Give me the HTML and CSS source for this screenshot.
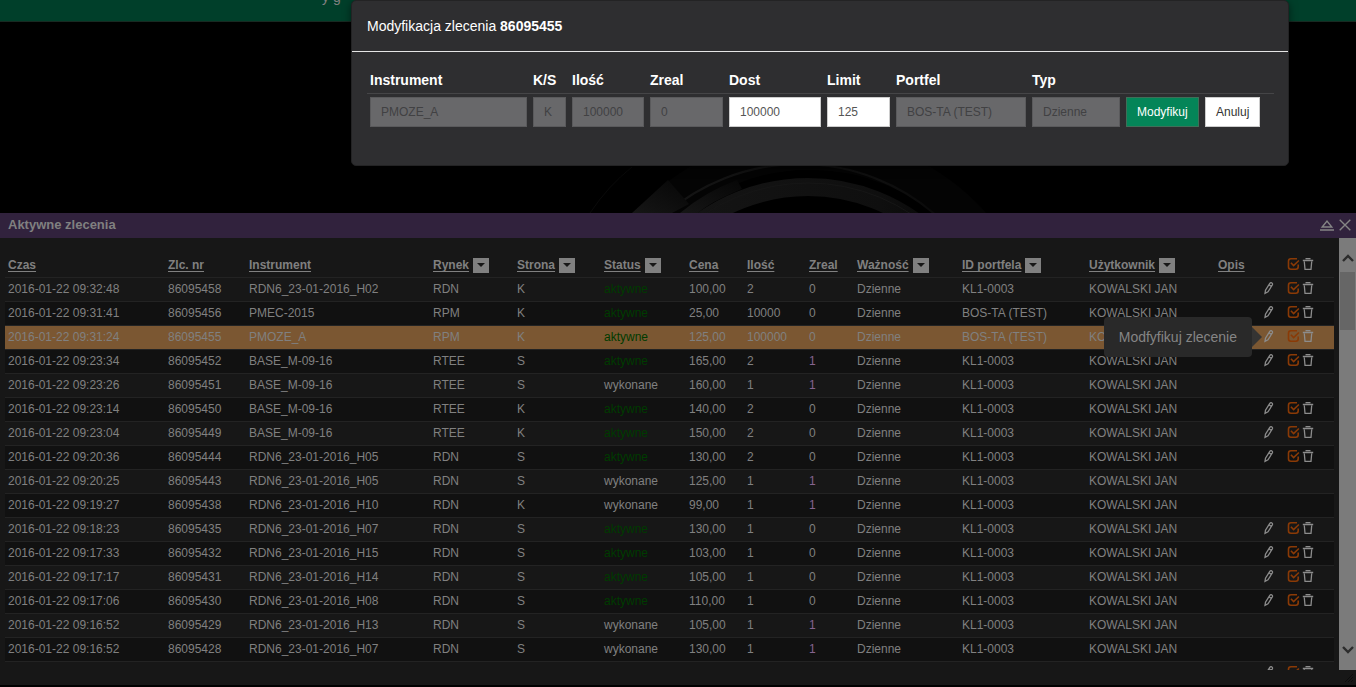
FILE: index.html
```html
<!DOCTYPE html>
<html lang="pl">
<head>
<meta charset="utf-8">
<title>Aktywne zlecenia</title>
<link rel="stylesheet" href="styles.css">
</head>
<body>
<svg class="sprite" aria-hidden="true">
  <symbol id="i-pencil" viewBox="0 0 12 14"><path d="M2 12.4 2.5 9.2 6.8 2.4Q7.6 1.2 8.8 1.9 10 2.8 9.3 4L5 10.8ZM6 3.9 8.6 5.5"/></symbol>
  <symbol id="i-check" viewBox="0 0 13 14"><path d="M11.2 7.5V9.8Q11.2 12.2 8.8 12.2H3.9Q1.5 12.2 1.5 9.8V4.2Q1.5 1.8 3.9 1.8H10"/><path d="M3.9 5.8 6.6 8.6 11.9 3.5"/></symbol>
  <symbol id="i-trash" viewBox="0 0 12 14"><path d="M.8 3.5H11.2M3.5 1.6H8.5M2.3 4.5 3 12.4H9L9.7 4.5"/></symbol>
  <symbol id="i-collapse" viewBox="0 0 14 12"><path d="M2.2 8 7 2 11.8 8ZM0 11H14"/></symbol>
  <symbol id="i-close" viewBox="0 0 12 12"><path d="M.7.7 11.3 11.3M11.3.7.7 11.3"/></symbol>
</svg>

<header class="topbar"><span class="topbar-text">y g</span></header>

<div class="backdrop">
  <svg class="rings" viewBox="0 0 440 191" width="440" height="191" aria-hidden="true">
    <defs>
      <linearGradient id="fade" x1="0" x2="1"><stop offset="0" stop-color="#161616"/><stop offset=".7" stop-color="#0f0f0f"/><stop offset="1" stop-color="#030303"/></linearGradient>
      <linearGradient id="wedge" x1="0" y1="1" x2="1" y2="0"><stop offset="0" stop-color="#161616"/><stop offset="1" stop-color="#060606"/></linearGradient>
    </defs>
    <g fill="none">
      <circle cx="230" cy="348" r="218" stroke="#040404" stroke-width="36"/>
      <circle cx="220" cy="348" r="206" stroke="url(#fade)" stroke-width="2"/>
      <circle cx="228" cy="348" r="183" stroke="url(#fade)" stroke-width="18"/>
      <circle cx="228" cy="348" r="187" stroke="#161616" stroke-width="1"/>
    </g>
    <path d="M10 191Q28 164 52 145" fill="none" stroke="#0a0a0a"/>
    <path d="M88 158 109 182 92 191H52Z" fill="url(#wedge)"/>
    <path d="M157 158 162 167Q130 180 118 191H100Q125 170 157 158Z" fill="url(#wedge)"/>
  </svg>
</div>

<section class="window">
  <header class="window-bar">
    <h1>Aktywne zlecenia</h1>
    <button class="tool" aria-label="Zwiń"><svg width="14" height="12"><use href="#i-collapse"/></svg></button>
    <button class="tool" aria-label="Zamknij"><svg width="12" height="12"><use href="#i-close"/></svg></button>
  </header>
  <div class="window-body">
    <div class="viewport">
      <table class="orders">
        <colgroup>
          <col class="w160"><col class="w81"><col class="w184"><col class="w84"><col class="w87"><col class="w85"><col class="w58">
          <col class="w62"><col class="w48"><col class="w105"><col class="w127"><col class="w129"><col class="w45"><col class="w74">
        </colgroup>
        <thead><tr id="head"></tr></thead>
        <tbody id="rows"></tbody>
      </table>
    </div>
    <div class="scrollbar" aria-hidden="true">
      <svg class="arrow" viewBox="0 0 12 10"><path d="M1 8 6 3 11 8"/></svg>
      <div class="thumb"></div>
      <svg class="arrow end" viewBox="0 0 12 10"><path d="M1 2 6 7 11 2"/></svg>
    </div>
  </div>
  <footer class="window-foot"><svg width="8" height="8" viewBox="0 0 8 8"><path d="M0 8 8 0M3 8 8 3M6 8 8 6"/></svg></footer>
</section>

<div class="modal" role="dialog" aria-labelledby="modal-title">
  <h2 class="modal-title" id="modal-title">Modyfikacja zlecenia <strong>86095455</strong></h2>
  <form class="modal-body">
    <table class="fields">
      <colgroup>
        <col class="w163"><col class="w39"><col class="w78"><col class="w79"><col class="w98"><col class="w69"><col class="w136"><col class="w94"><col class="w79"><col class="w72">
      </colgroup>
      <thead><tr>
        <th><label for="f1">Instrument</label></th><th><label for="f2">K/S</label></th><th><label for="f3">Ilość</label></th>
        <th><label for="f4">Zreal</label></th><th><label for="f5">Dost</label></th><th><label for="f6">Limit</label></th>
        <th><label for="f7">Portfel</label></th><th><label for="f8">Typ</label></th><th></th><th></th>
      </tr></thead>
      <tbody><tr>
        <td><input id="f1" value="PMOZE_A" disabled></td>
        <td><input id="f2" value="K" disabled></td>
        <td><input id="f3" value="100000" disabled></td>
        <td><input id="f4" value="0" disabled></td>
        <td><input id="f5" value="100000"></td>
        <td><input id="f6" value="125"></td>
        <td><input id="f7" value="BOS-TA (TEST)" disabled></td>
        <td><input id="f8" value="Dzienne" disabled></td>
        <td><button class="btn primary" type="button">Modyfikuj</button></td>
        <td><button class="btn" type="button">Anuluj</button></td>
      </tr></tbody>
    </table>
  </form>
</div>
<script src="app.js"></script>
</body>
</html>
```
FILE: styles.css
```css
* { box-sizing: border-box; }
body {
  margin: 0;
  height: 100vh;
  overflow: hidden;
  display: flex;
  flex-direction: column;
  position: relative;
  background: #000;
  color: #808080;
  font: 12px/16px "Liberation Sans", Arial, sans-serif;
}
button { font: inherit; color: inherit; padding: 0; border: 0; background: none; cursor: pointer; }
table { border-collapse: collapse; table-layout: fixed; width: 100%; }
svg { display: block; fill: none; stroke: currentColor; }
.sprite { position: absolute; width: 0; height: 0; }

.topbar { flex: none; height: 22px; overflow: hidden; background: #003f2a; border-bottom: 1px solid #182a22; padding-left: 322px; }
.topbar-text { display: block; margin-top: -11px; font-size: 14px; color: #808080; }

.backdrop { flex: none; height: 191px; padding-left: 580px; overflow: hidden; }
.rings { stroke: none; }

.window { flex: 1; min-height: 0; display: flex; flex-direction: column; margin-bottom: 2px; background: #171717; }
.window-bar { display: flex; align-items: center; gap: 5px; height: 25px; padding: 0 5px 1px 8px; background: #31223d; }
.window-bar h1 { flex: 1; margin: 0; font-size: 13px; line-height: 16px; }
.tool { color: #858585; }
.tool svg { stroke-width: 1.4; }
.window-body { flex: 1; min-height: 0; display: flex; }
.viewport { flex: 1; min-width: 0; overflow: hidden; padding: 15px 5px 0; }
.window-foot { height: 15px; padding: 4px 3px; display: flex; justify-content: flex-end; color: #0c0c0c; }

.orders th, .orders td { height: 24px; padding: 0 3px; border-bottom: 1px solid #232323; text-align: left; white-space: nowrap; }
.orders th a { color: inherit; text-decoration: underline; text-underline-offset: 2px; }
.orders th .label { display: flex; align-items: center; gap: 4px; padding-top: 1px; }
.orders tbody tr:nth-child(even) { background: #111; }
.orders tbody tr.selected { background: #7b5732; }
.orders .active { color: #003b00; }
.orders .done { color: #86638f; }
.filter { width: 16px; height: 15px; background: #808080; display: grid; place-items: center; }
.filter::after { content: ""; border: 4px solid transparent; border-top-color: #171717; border-bottom: 0; }
.actions { display: flex; align-items: center; position: relative; height: 16px; padding-bottom: 2px; color: #8c8c8c; }
.actions .edit { width: 24px; }
.actions .confirm { width: 15px; color: #8a3a06; }
.actions svg { height: 14px; stroke-width: 1.3; }
.actions .confirm svg { stroke-width: 1.6; }

.tip {
  position: absolute; right: 79px; top: 50%; transform: translateY(-50%);
  height: 40px; padding: 0 15px; border-radius: 4px;
  background: #292929; color: #858585; font-size: 14px; line-height: 40px;
}
.tip::after { content: ""; position: absolute; left: 100%; top: 10px; border: 10px solid transparent; border-left-color: #353433; border-right: 0; }

.scrollbar { width: 17px; display: flex; flex-direction: column; background: #7b7b7b; color: #2c2c2c; padding: 15px 0; }
.arrow { width: 12px; height: 10px; margin: 0 3px; stroke-width: 2.4; }
.thumb { height: 58px; margin: 9px 1px 0; background: #666; }
.end { margin-top: auto; }

.modal {
  position: absolute; top: 0; left: 351px; right: 67px;
  border: 1px solid #232324; border-radius: 5px;
  background: #2e2e30; color: #fff; box-shadow: 0 3px 9px rgba(0, 0, 0, .5);
}
.modal-title { margin: 0; padding: 15px; border-bottom: 1px solid #e5e5e5; font-size: 14px; line-height: 20px; font-weight: 400; }
.modal-body { padding: 15px 14px 38px 15px; }
.fields th { height: 26px; padding: 0 3px; border-bottom: 1px solid #454547; font-size: 14px; text-align: left; }
.fields td { padding: 3px 3px 0; }
.fields input { display: block; width: 100%; height: 30px; padding: 0 10px; border: 1px solid #ccc; border-radius: 0; background: #fff; color: #555; font: inherit; }
.fields input:disabled { background: #68686a; border-color: #5a5a5c; color: #414143; }
.btn { height: 30px; padding: 0 10px; border: 1px solid #ccc; background: #fff; color: #333; }
.btn.primary { background: #048558; border-color: #3f6f58; color: #fff; }

.w39 { width: 39px; } .w45 { width: 45px; } .w48 { width: 48px; } .w58 { width: 58px; }
.w62 { width: 62px; } .w69 { width: 69px; } .w72 { width: 72px; } .w74 { width: 74px; }
.w78 { width: 78px; } .w79 { width: 79px; } .w81 { width: 81px; } .w84 { width: 84px; }
.w85 { width: 85px; } .w87 { width: 87px; } .w94 { width: 94px; } .w98 { width: 98px; }
.w105 { width: 105px; } .w127 { width: 127px; } .w129 { width: 129px; } .w136 { width: 136px; }
.w160 { width: 160px; } .w163 { width: 163px; } .w184 { width: 184px; }
```
FILE: app.js
```js
const columns = [
  ["Czas"], ["Zlc. nr"], ["Instrument"], ["Rynek", true], ["Strona", true], ["Status", true], ["Cena"],
  ["Ilość"], ["Zreal"], ["Ważność", true], ["ID portfela", true], ["Użytkownik", true], ["Opis"]
];
// time, number, instrument, market, side, price, quantity, executed, editable
const orders = [
  ["09:32:48", "86095458", "RDN6_23-01-2016_H02", "RDN", "K", "100,00", "2", "0", 1],
  ["09:31:41", "86095456", "PMEC-2015", "RPM", "K", "25,00", "10000", "0", 1],
  ["09:31:24", "86095455", "PMOZE_A", "RPM", "K", "125,00", "100000", "0", 1],
  ["09:23:34", "86095452", "BASE_M-09-16", "RTEE", "S", "165,00", "2", "1", 1],
  ["09:23:26", "86095451", "BASE_M-09-16", "RTEE", "S", "160,00", "1", "1", 0],
  ["09:23:14", "86095450", "BASE_M-09-16", "RTEE", "K", "140,00", "2", "0", 1],
  ["09:23:04", "86095449", "BASE_M-09-16", "RTEE", "K", "150,00", "2", "0", 1],
  ["09:20:36", "86095444", "RDN6_23-01-2016_H05", "RDN", "S", "130,00", "2", "0", 1],
  ["09:20:25", "86095443", "RDN6_23-01-2016_H05", "RDN", "S", "125,00", "1", "1", 0],
  ["09:19:27", "86095438", "RDN6_23-01-2016_H10", "RDN", "K", "99,00", "1", "1", 0],
  ["09:18:23", "86095435", "RDN6_23-01-2016_H07", "RDN", "S", "130,00", "1", "0", 1],
  ["09:17:33", "86095432", "RDN6_23-01-2016_H15", "RDN", "S", "103,00", "1", "0", 1],
  ["09:17:17", "86095431", "RDN6_23-01-2016_H14", "RDN", "S", "105,00", "1", "0", 1],
  ["09:17:06", "86095430", "RDN6_23-01-2016_H08", "RDN", "S", "110,00", "1", "0", 1],
  ["09:16:52", "86095429", "RDN6_23-01-2016_H13", "RDN", "S", "105,00", "1", "1", 0],
  ["09:16:52", "86095428", "RDN6_23-01-2016_H07", "RDN", "S", "130,00", "1", "1", 0]
];
const selected = "86095455";

const button = (cls, icon, label, width) =>
  `<button class="${cls}" aria-label="${label}"><svg width="${width}" height="14"><use href="#${icon}"/></svg></button>`;
const actions = (edit, tip = "") => `<div class="actions">${
  edit ? button("edit", "i-pencil", "Modyfikuj", 12) : '<span class="edit"></span>'}${
  button("confirm", "i-check", "Zatwierdź", 13)}${button("delete", "i-trash", "Usuń", 12)}${tip}</div>`;

document.getElementById("head").innerHTML = columns.map(([name, filter]) =>
  `<th><span class="label"><a href="#">${name}</a>${
    filter ? `<button class="filter" aria-label="Filtruj: ${name}"></button>` : ""}</span></th>`
).join("") + `<th>${actions(false)}</th>`;

document.getElementById("rows").innerHTML = orders.map(o => {
  const [time, number, instrument, market, side, price, quantity, executed, editable] = o;
  const tip = number === selected ? '<span class="tip" role="tooltip">Modfyfikuj zlecenie</span>' : "";
  const portfolio = market === "RPM" ? "BOS-TA (TEST)" : "KL1-0003";
  return `<tr class="${number === selected ? "selected" : ""}">
    <td>2016-01-22 ${time}</td><td>${number}</td><td>${instrument}</td><td>${market}</td><td>${side}</td>
    <td class="${editable ? "active" : ""}">${editable ? "aktywne" : "wykonane"}</td>
    <td>${price}</td><td>${quantity}</td><td class="${executed === "1" ? "done" : ""}">${executed}</td>
    <td>Dzienne</td><td>${portfolio}</td><td>KOWALSKI JAN</td><td></td>
    <td>${editable ? actions(true, tip) : ""}</td></tr>`;
}).join("") + `<tr><td colspan="13"></td><td>${actions(true)}</td></tr>`;
```
